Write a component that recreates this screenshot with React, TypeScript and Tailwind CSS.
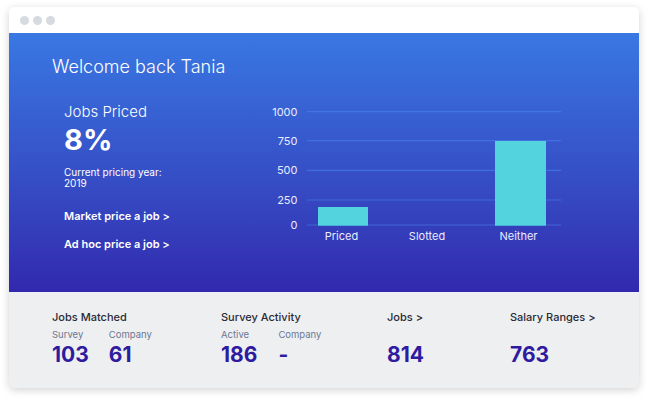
import React from "react";

const yTicks = [
  { label: "1000", y: 11.7 },
  { label: "750", y: 40.7 },
  { label: "500", y: 70.3 },
  { label: "250", y: 100 },
  { label: "0", y: 125 },
];

const bars = [
  { label: "Priced", x: 53, w: 50, top: 107, cx: 76.5 },
  { label: "Slotted", x: 0, w: 0, top: 125, cx: 162 },
  { label: "Neither", x: 230, w: 51, top: 41, cx: 253.5 },
];

function PricedChart() {
  return (
    <svg width="300" height="150" viewBox="0 0 300 150" className="shrink-0">
      {yTicks.map((t) => (
        <g key={t.label}>
          <line x1="42" x2="296" y1={t.y} y2={t.y} stroke="#4a86f0" strokeOpacity="0.55" strokeWidth="1.2" />
          <text
            x="32.5"
            y={t.y + 4}
            textAnchor="end"
            fontSize="11"
            fill="#e9edff"
            fontFamily="Inter, sans-serif"
          >
            {t.label}
          </text>
        </g>
      ))}
      {bars.map((b) =>
        b.w > 0 ? (
          <rect key={b.label} x={b.x} y={b.top} width={b.w} height={125.7 - b.top} fill="#53d3dd" />
        ) : null
      )}
      {bars.map((b) => (
        <text
          key={b.label + "-l"}
          x={b.cx}
          y={140}
          textAnchor="middle"
          fontSize="11"
          fill="#e9edff"
          fontFamily="Inter, sans-serif"
        >
          {b.label}
        </text>
      ))}
    </svg>
  );
}

function Stat({ label, value }: { label: string; value: string }) {
  return (
    <div className="flex flex-col">
      <span className="h-[12px] text-[9.5px] leading-[12px] text-[#6b7891]">{label}</span>
      <span className="text-[21px] leading-[24px] font-bold text-[#2f1b9f] mt-[2px]">{value}</span>
    </div>
  );
}

export default function App() {
  return (
    <div
      className="w-[648px] h-[400px] bg-white pt-[7px] px-[9px]"
      style={{ fontFamily: "Inter, 'Noto Sans', sans-serif" }}
    >
      <div className="w-[630px] rounded-md overflow-hidden shadow-[0_2px_8px_rgba(0,0,0,0.18)]">
        <div className="h-[26px] bg-white flex items-center gap-[4px] pl-[11px]">
          <span className="w-[9px] h-[9px] rounded-full bg-[#d6dbe1]" />
          <span className="w-[9px] h-[9px] rounded-full bg-[#d6dbe1]" />
          <span className="w-[9px] h-[9px] rounded-full bg-[#d6dbe1]" />
        </div>

        <div className="h-[259px] bg-gradient-to-b from-[#3978e3] to-[#3228ae] px-[43px] pt-[22px] text-white">
          <h1 className="text-[18px] leading-[24px] font-light">Welcome back Tania</h1>
          <div className="flex items-start mt-[21px]">
            <div className="w-[200px] ml-[12px] pt-[2px] flex flex-col">
              <span className="text-[15px] leading-[20px] font-light">Jobs Priced</span>
              <span className="text-[29px] leading-[32px] font-bold mt-[2px]">8%</span>
              <span className="text-[10px] leading-[11px] mt-[11px] w-[110px]">
                Current pricing year: 2019
              </span>
              <span className="text-[11px] leading-[16px] font-semibold mt-[19px]">Market price a job &gt;</span>
              <span className="text-[11px] leading-[16px] font-semibold mt-[12px]">Ad hoc price a job &gt;</span>
            </div>
            <div className="ml-[1px]">
              <PricedChart />
            </div>
          </div>
        </div>

        <div className="h-[96px] bg-[#eeeff1] pl-[43px] pt-[16px] flex">
          <div className="w-[169px] flex flex-col">
            <span className="text-[11px] leading-[18px] font-medium text-[#2a2a35]">Jobs Matched</span>
            <div className="flex gap-[20px] mt-[3px]">
              <Stat label="Survey" value="103" />
              <Stat label="Company" value="61" />
            </div>
          </div>
          <div className="w-[166px] flex flex-col">
            <span className="text-[11px] leading-[18px] font-medium text-[#2a2a35]">Survey Activity</span>
            <div className="flex gap-[21px] mt-[3px]">
              <Stat label="Active" value="186" />
              <Stat label="Company" value="-" />
            </div>
          </div>
          <div className="w-[123px] flex flex-col">
            <span className="text-[11px] leading-[18px] font-medium text-[#2a2a35]">Jobs &gt;</span>
            <div className="mt-[3px]">
              <Stat label="" value="814" />
            </div>
          </div>
          <div className="flex flex-col">
            <span className="text-[11px] leading-[18px] font-medium text-[#2a2a35]">Salary Ranges &gt;</span>
            <div className="mt-[3px]">
              <Stat label="" value="763" />
            </div>
          </div>
        </div>
      </div>
    </div>
  );
}
